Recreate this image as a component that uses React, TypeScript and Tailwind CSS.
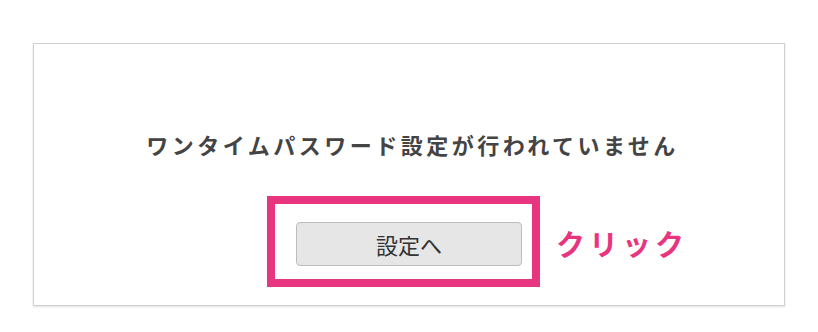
import React from 'react'

const App = () => {
  return (
    <div
      className="w-[818px] h-[332px] bg-white pt-[43px] px-[33px]"
      style={{ fontFamily: '"Noto Sans CJK JP", "Noto Sans", sans-serif' }}
    >
      <div className="h-[263px] border border-[#cfcfcf] shadow-[0_1px_2px_rgba(0,0,0,0.12)] bg-white flex flex-col items-center">
        {/* Message */}
        <p className="mt-[85px] text-[22px] leading-[30px] font-bold tracking-[3.5px] text-[#444] pl-[7px]">
          ワンタイムパスワード設定が行われていません
        </p>

        {/* Button + annotation */}
        <div className="relative mt-[63px]">
          <button className="w-[226px] h-[44px] rounded-[4px] border border-[#bdbdbd] bg-[#e6e6e6] text-[22px] leading-none text-[#333]">
            設定へ
          </button>
          <div className="absolute left-[-29px] right-[-18px] top-[-26px] bottom-[-21px] border-[8px] border-[#e8357f]" />
          <span className="absolute left-[260px] top-[1px] whitespace-nowrap text-[29px] leading-[40px] font-bold tracking-[4px] text-[#e8357f]">
            クリック
          </span>
        </div>
      </div>
    </div>
  )
}

export default App
